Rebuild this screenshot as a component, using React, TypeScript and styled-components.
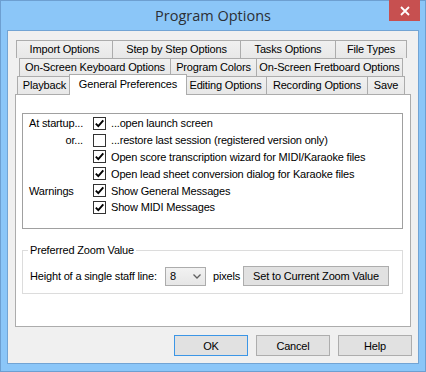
import styled, { createGlobalStyle } from "styled-components"

const GlobalStyle = createGlobalStyle`
  html, body {
    margin: 0;
    padding: 0;
    background: #ffffff;
  }
  body {
    font-family: "Liberation Sans", Arial, sans-serif;
    font-size: 11px;
    letter-spacing: -0.17px;
    color: #000000;
  }
  * {
    box-sizing: border-box;
  }
`

type WidthProps = { $w: number }
type OffsetProps = { $offset: number }
type AlignProps = { $align: "left" | "right" }

const Window = styled.div`
  width: 426px;
  height: 372px;
  border: 1px solid #6d9fd1;
  background: #8bc6f8;
  display: flex;
  flex-direction: column;
  padding: 0 6px 7px 6px;
`

const TitleBar = styled.div`
  height: 29px;
  flex-shrink: 0;
  display: grid;
  grid-template-columns: 1fr auto 1fr;
  align-items: start;
`

const Title = styled.div`
  grid-column: 2;
  font-family: "Open Sans", "Noto Sans", sans-serif;
  font-size: 14.5px;
  letter-spacing: 0;
  line-height: 29px;
  color: #2b2f35;
`

const CloseButton = styled.div`
  grid-column: 3;
  justify-self: end;
  width: 31px;
  height: 21px;
  margin-top: -1px;
  margin-right: -1px;
  background: #c75050;
  display: flex;
  align-items: center;
  justify-content: center;
`

const Client = styled.div`
  flex: 1;
  border: 1px solid #72a4d4;
  background: #f0f0f0;
  display: flex;
  flex-direction: column;
  padding: 9px 7px 0 7px;
`

const TabStrip = styled.div`
  display: flex;
  flex-direction: column;
`

const TabRow = styled.div<OffsetProps>`
  display: flex;
  height: 18px;
  align-items: flex-end;
  margin-left: ${({ $offset }) => $offset}px;
`

const Tab = styled.div<WidthProps>`
  width: ${({ $w }) => $w}px;
  height: 18px;
  margin-left: -1px;
  border: 1px solid #acacac;
  border-bottom: none;
  background: linear-gradient(#f0f0f0, #e8e8e8);
  text-align: center;
  line-height: 17px;
  white-space: nowrap;
  &:first-child {
    margin-left: 0;
  }
`

const ActiveTab = styled(Tab)`
  position: relative;
  z-index: 1;
  height: 21px;
  margin-top: -2px;
  margin-bottom: -1px;
  margin-left: -3px;
  margin-right: -2px;
  background: #ffffff;
  line-height: 18px;
`

const Panel = styled.div`
  height: 233px;
  border: 1px solid #acacac;
  background: #ffffff;
  padding: 18px 7px 0 6px;
  display: flex;
  flex-direction: column;
`

const StartupBox = styled.div`
  height: 116px;
  border: 1px solid #a0a0a0;
  padding: 1px 0 0 6px;
  display: flex;
  flex-direction: column;
`

const OptionRow = styled.div`
  height: 16.8px;
  display: flex;
  align-items: center;
`

const RowLabel = styled.div<AlignProps>`
  width: 54px;
  margin-right: 10px;
  text-align: ${({ $align }) => $align};
  white-space: nowrap;
`

const Box = styled.div`
  width: 13px;
  height: 13px;
  border: 1px solid #333333;
  background: #ffffff;
  margin-right: 5px;
  display: flex;
  align-items: center;
  justify-content: center;
  flex-shrink: 0;
`

const OptionText = styled.span`
  white-space: nowrap;
`

const ZoomGroup = styled.fieldset`
  margin: 15px 0 0 0;
  padding: 9px 0 7px 7px;
  border: 1px solid #dcdcdc;
  min-width: 0;
`

const Legend = styled.legend`
  margin-left: -2px;
  padding: 0 2px;
  line-height: 13px;
`

const ZoomRow = styled.div`
  display: flex;
  align-items: center;
  height: 20px;
`

const ZoomLabel = styled.span`
  width: 135px;
  white-space: nowrap;
`

const Select = styled.div`
  width: 41px;
  height: 19px;
  border: 1px solid #acacac;
  background: linear-gradient(#f2f2f2, #e6e6e6);
  display: flex;
  align-items: center;
  justify-content: space-between;
  padding: 0 4px 0 4px;
`

const Unit = styled.span`
  width: 37px;
  padding-left: 7px;
`

const Button = styled.div<WidthProps & { $default?: boolean }>`
  width: ${({ $w }) => $w}px;
  height: 20px;
  border: 1px solid ${({ $default }) => ($default ? "#3c96e6" : "#adadad")};
  background: #e1e1e1;
  display: flex;
  align-items: center;
  justify-content: center;
  white-space: nowrap;
`

const ButtonBar = styled.div`
  display: flex;
  justify-content: flex-end;
  gap: 8px;
  margin: 8px -1px 0 0;
`

const DialogButton = styled(Button)`
  height: 21px;
`

const Check = () => (
  <svg width="11" height="11" viewBox="0 0 11 11">
    <path d="M1.8 5.6 L4.3 8.1 L9.3 2.4" fill="none" stroke="#000" strokeWidth="1.9" />
  </svg>
)

const options = [
  { label: "At startup...", align: "left" as const, checked: true, text: "...open launch screen" },
  { label: "or...", align: "right" as const, checked: false, text: "...restore last session (registered version only)" },
  { label: "", align: "left" as const, checked: true, text: "Open score transcription wizard for MIDI/Karaoke files" },
  { label: "", align: "left" as const, checked: true, text: "Open lead sheet conversion dialog for Karaoke files" },
  { label: "Warnings", align: "left" as const, checked: true, text: "Show General Messages" },
  { label: "", align: "left" as const, checked: true, text: "Show MIDI Messages" },
]

export default function App() {
  return (
    <>
      <GlobalStyle />
      <Window>
        <TitleBar>
          <Title>Program Options</Title>
          <CloseButton>
            <svg width="10" height="10" viewBox="0 0 10 10">
              <path d="M1 1 L9 9 M9 1 L1 9" stroke="#fff" strokeWidth="1.8" />
            </svg>
          </CloseButton>
        </TitleBar>

        <Client>
          <TabStrip>
            <TabRow $offset={1}>
              <Tab $w={97}>Import Options</Tab>
              <Tab $w={129}>Step by Step Options</Tab>
              <Tab $w={96}>Tasks Options</Tab>
              <Tab $w={72}>File Types</Tab>
            </TabRow>
            <TabRow $offset={4}>
              <Tab $w={152}>On-Screen Keyboard Options</Tab>
              <Tab $w={87}>Program Colors</Tab>
              <Tab $w={147}>On-Screen Fretboard Options</Tab>
            </TabRow>
            <TabRow $offset={2}>
              <Tab $w={55}>Playback</Tab>
              <ActiveTab $w={118}>General Preferences</ActiveTab>
              <Tab $w={83}>Editing Options</Tab>
              <Tab $w={102}>Recording Options</Tab>
              <Tab $w={38}>Save</Tab>
            </TabRow>
          </TabStrip>

          <Panel>
            <StartupBox>
              {options.map((o) => (
                <OptionRow key={o.text}>
                  <RowLabel $align={o.align}>{o.label}</RowLabel>
                  <Box>{o.checked && <Check />}</Box>
                  <OptionText>{o.text}</OptionText>
                </OptionRow>
              ))}
            </StartupBox>

            <ZoomGroup>
              <Legend>Preferred Zoom Value</Legend>
              <ZoomRow>
                <ZoomLabel>Height of a single staff line:</ZoomLabel>
                <Select>
                  <span>8</span>
                  <svg width="8" height="5" viewBox="0 0 8 5">
                    <path d="M0.5 0.5 L4 4 L7.5 0.5" fill="none" stroke="#606060" strokeWidth="1.3" />
                  </svg>
                </Select>
                <Unit>pixels</Unit>
                <Button $w={146}>Set to Current Zoom Value</Button>
              </ZoomRow>
            </ZoomGroup>
          </Panel>

          <ButtonBar>
            <DialogButton $w={74} $default>OK</DialogButton>
            <DialogButton $w={74}>Cancel</DialogButton>
            <DialogButton $w={74}>Help</DialogButton>
          </ButtonBar>
        </Client>
      </Window>
    </>
  )
}
